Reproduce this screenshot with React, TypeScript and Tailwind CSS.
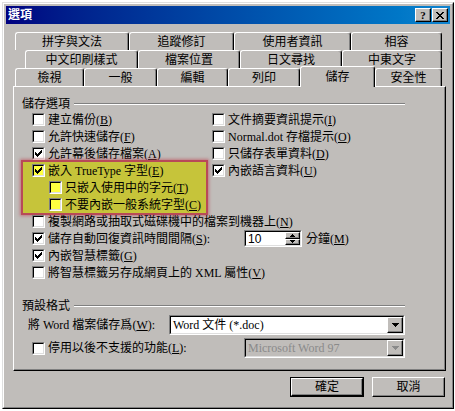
const raised =
  "border border-t-white border-l-white border-b-black border-r-black shadow-[inset_-1px_-1px_#808080]";

function Mn({ k }: { k: string }) {
  return (
    <span>
      (<u className="underline-offset-1">{k}</u>)
    </span>
  );
}

function Check({ checked, yellow }: { checked?: boolean; yellow?: boolean }) {
  return (
    <span className="flex size-[13px] shrink-0 border border-t-[#808080] border-l-[#808080] border-b-white border-r-white">
      <span
        className={`flex flex-1 items-center justify-center border border-t-black border-l-black border-b-[#dfdfdf] border-r-[#dfdfdf] ${
          yellow ? "bg-[#ffff40]" : "bg-white"
        }`}
      >
        {checked ? (
          <svg width="7" height="7" viewBox="0 0 7 7" shapeRendering="crispEdges">
            <path
              d="M0 2h1v1h1v1h1V3h1V2h1V1h1V0h1v3H6v1H5v1H4v1H3v1H2V6H1V5H0z"
              fill="black"
            />
          </svg>
        ) : null}
      </span>
    </span>
  );
}

function Opt({
  label,
  k,
  checked,
  yellow,
}: {
  label: string;
  k: string;
  checked?: boolean;
  yellow?: boolean;
}) {
  return (
    <div className="flex h-[17px] items-center gap-[3px]">
      <Check checked={checked} yellow={yellow} />
      <span className="whitespace-nowrap">
        {label}
        <Mn k={k} />
      </span>
    </div>
  );
}

function GroupHead({ label }: { label: string }) {
  return (
    <div className="flex h-[15px] w-[383px] items-center">
      <span className="whitespace-nowrap">{label}</span>
      <span className="ml-[4px] h-[2px] flex-1 border-t border-b border-t-[#808080] border-b-white" />
    </div>
  );
}

function Arrow({ color }: { color: string }) {
  return (
    <svg width="7" height="4" viewBox="0 0 7 4" shapeRendering="crispEdges">
      <path d="M0 0h7L3.5 4z" fill={color} />
    </svg>
  );
}

function Combo({ text, width, disabled }: { text: string; width: string; disabled?: boolean }) {
  return (
    <div
      className={`flex h-[20px] border border-t-[#808080] border-l-[#808080] border-b-white border-r-white ${width}`}
    >
      <div
        className={`flex flex-1 items-center border border-t-black border-l-black border-b-[#dfdfdf] border-r-[#dfdfdf] ${
          disabled ? "bg-[#c0bdba]" : "bg-white"
        }`}
      >
        <span
          className={`flex-1 pl-[2px] whitespace-nowrap ${
            disabled ? "text-[#8a8a8a]" : "text-black"
          }`}
        >
          {text}
        </span>
        <span className={`flex h-full w-[16px] items-center justify-center bg-[#c0bdba] ${raised}`}>
          <Arrow color={disabled ? "#8a8a8a" : "black"} />
        </span>
      </div>
    </div>
  );
}

function Tab({ label, w }: { label: string; w: string }) {
  return (
    <div
      className={`flex h-[18px] shrink-0 items-center justify-center rounded-t-[3px] border-t border-l border-r border-t-white border-l-white border-r-black shadow-[inset_-1px_0_#808080] ${w}`}
    >
      {label}
    </div>
  );
}

export default function App() {
  return (
    <div className="min-h-[411px] w-[455px] bg-white pt-[2px] pl-[2px] text-[12px] leading-[14px] text-black [font-family:'Liberation_Serif','Noto_Sans_CJK_TC',serif]">
      <div className="h-[407px] w-[452px] border border-t-[#dfdfdf] border-l-[#dfdfdf] border-b-black border-r-black bg-[#c0bdba]">
        <div className="flex h-full flex-col border border-t-white border-l-white border-b-[#808080] border-r-[#808080] p-[2px]">
          {/* title bar */}
          <div className="flex h-[18px] items-center bg-linear-to-r from-[#000080] to-[#1084d0] pr-[2px] pl-[2px]">
            <span className="flex-1 font-bold text-white">選項</span>
            <span className={`flex h-[14px] w-[16px] items-center justify-center bg-[#c0bdba] text-[11px] font-bold leading-none ${raised}`}>
              ?
            </span>
            <span className={`ml-[1px] flex h-[14px] w-[16px] items-center justify-center bg-[#c0bdba] ${raised}`}>
              <svg width="8" height="7" viewBox="0 0 8 7" shapeRendering="crispEdges">
                <path
                  d="M0 0h2v1h1v1h2V1h1V0h2v1H7v1H6v1H5v1h1v1h1v1h1v1H6V6H5V5H3v1H2v1H0V6h1V5h1V4h1V3H2V2H1V1H0z"
                  fill="black"
                />
              </svg>
            </span>
          </div>

          {/* tabs */}
          <div className="mt-[8px] flex flex-col">
            <div className="ml-[9px] flex">
              <Tab label="拼字與文法" w="w-[114px]" />
              <Tab label="追蹤修訂" w="w-[105px]" />
              <Tab label="使用者資訊" w="w-[117px]" />
              <Tab label="相容" w="w-[91px]" />
            </div>
            <div className="ml-[19px] flex">
              <Tab label="中文印刷樣式" w="w-[113px]" />
              <Tab label="檔案位置" w="w-[102px]" />
              <Tab label="日文尋找" w="w-[102px]" />
              <Tab label="中東文字" w="w-[100px]" />
            </div>
            <div className="ml-[9px] flex h-[18px]">
              <Tab label="檢視" w="w-[69px]" />
              <Tab label="一般" w="w-[73px]" />
              <Tab label="編輯" w="w-[71px]" />
              <Tab label="列印" w="w-[72px]" />
              <div className="relative z-10 -mt-[2px] flex h-[21px] w-[75px] shrink-0 items-start justify-center rounded-t-[3px] border-t border-l border-r border-t-white border-l-white border-r-black bg-[#c0bdba] pt-[3px] shadow-[inset_-1px_0_#808080]">
                儲存
              </div>
              <Tab label="安全性" w="w-[67px]" />
            </div>
          </div>

          {/* panel */}
          <div className="ml-[7px] flex h-[285px] w-[433px] flex-col border border-t-white border-l-white border-b-black border-r-black pl-[8px] shadow-[inset_-1px_-1px_#808080]">
            <div className="mt-[9px]">
              <GroupHead label="儲存選項" />
            </div>
            <div className="ml-[10px] flex">
              <div className="flex w-[180px] flex-col">
                <Opt label="建立備份" k="B" />
                <Opt label="允許快速儲存" k="F" />
                <Opt label="允許幕後儲存檔案" k="A" checked />
                <div className="-mt-[2px] -mb-[2px] -ml-[11px] w-[187px] border-2 border-[#b84a58] bg-[#c6c43a] pl-[9px] shadow-[0_0_3px_1px_rgba(190,70,85,0.6)]">
                  <Opt label="嵌入 TrueType 字型" k="E" checked yellow />
                  <div className="pl-[17px]">
                    <Opt label="只嵌入使用中的字元" k="T" yellow />
                    <Opt label="不要內嵌一般系統字型" k="C" yellow />
                  </div>
                </div>
              </div>
              <div className="flex flex-col">
                <Opt label="文件摘要資訊提示" k="I" />
                <Opt label="Normal.dot 存檔提示" k="O" />
                <Opt label="只儲存表單資料" k="D" />
                <Opt label="內嵌語言資料" k="U" checked />
              </div>
            </div>
            <div className="ml-[10px] flex flex-col">
              <Opt label="複製網路或抽取式磁碟機中的檔案到機器上" k="N" />
              <div className="flex h-[17px] items-center gap-[3px]">
                <Check checked />
                <span className="w-[193px] whitespace-nowrap">
                  儲存自動回復資訊時間間隔
                  <Mn k="S" />:
                </span>
                <div className="flex h-[17px] w-[58px] border border-t-[#808080] border-l-[#808080] border-b-white border-r-white">
                  <div className="flex flex-1 items-center border border-t-black border-l-black border-b-[#dfdfdf] border-r-[#dfdfdf] bg-white">
                    <span className="flex-1 pl-[2px] [font-family:'Liberation_Sans',sans-serif]">10</span>
                    <div className="flex h-full w-[15px] flex-col">
                      <span className={`flex flex-1 items-center justify-center bg-[#c0bdba] ${raised}`}>
                        <svg width="5" height="3" viewBox="0 0 5 3" shapeRendering="crispEdges">
                          <path d="M2 0h1v1h1v1h1v1H0V2h1V1h1z" fill="black" />
                        </svg>
                      </span>
                      <span className={`flex flex-1 items-center justify-center bg-[#c0bdba] ${raised}`}>
                        <svg width="5" height="3" viewBox="0 0 5 3" shapeRendering="crispEdges">
                          <path d="M0 0h5v1H4v1H3v1H2V2H1V1H0z" fill="black" />
                        </svg>
                      </span>
                    </div>
                  </div>
                </div>
                <span className="ml-[1px] whitespace-nowrap">
                  分鐘
                  <Mn k="M" />
                </span>
              </div>
              <Opt label="內嵌智慧標籤" k="G" checked />
              <Opt label="將智慧標籤另存成網頁上的 XML 屬性" k="V" />
            </div>

            <div className="mt-[17px]">
              <GroupHead label="預設格式" />
            </div>
            <div className="mt-[2px] ml-[6px] flex h-[20px] items-center">
              <span className="w-[141px] whitespace-nowrap">
                將 Word 檔案儲存爲
                <Mn k="W" />:
              </span>
              <Combo text="Word 文件 (*.doc)" width="w-[236px]" />
            </div>
            <div className="mt-[3px] ml-[10px] flex h-[20px] items-center gap-[3px]">
              <Check />
              <span className="w-[193px] whitespace-nowrap">
                停用以後不支援的功能
                <Mn k="L" />:
              </span>
              <Combo text="Microsoft Word 97" width="w-[161px]" disabled />
            </div>
          </div>

          {/* buttons */}
          <div className="mt-[6px] flex justify-end gap-[8px] pr-[5px]">
            <div className="flex h-[20px] w-[74px] border border-black">
              <div className={`flex flex-1 items-center justify-center ${raised}`}>確定</div>
            </div>
            <div className={`flex h-[20px] w-[73px] items-center justify-center ${raised}`}>取消</div>
          </div>
        </div>
      </div>
    </div>
  );
}
